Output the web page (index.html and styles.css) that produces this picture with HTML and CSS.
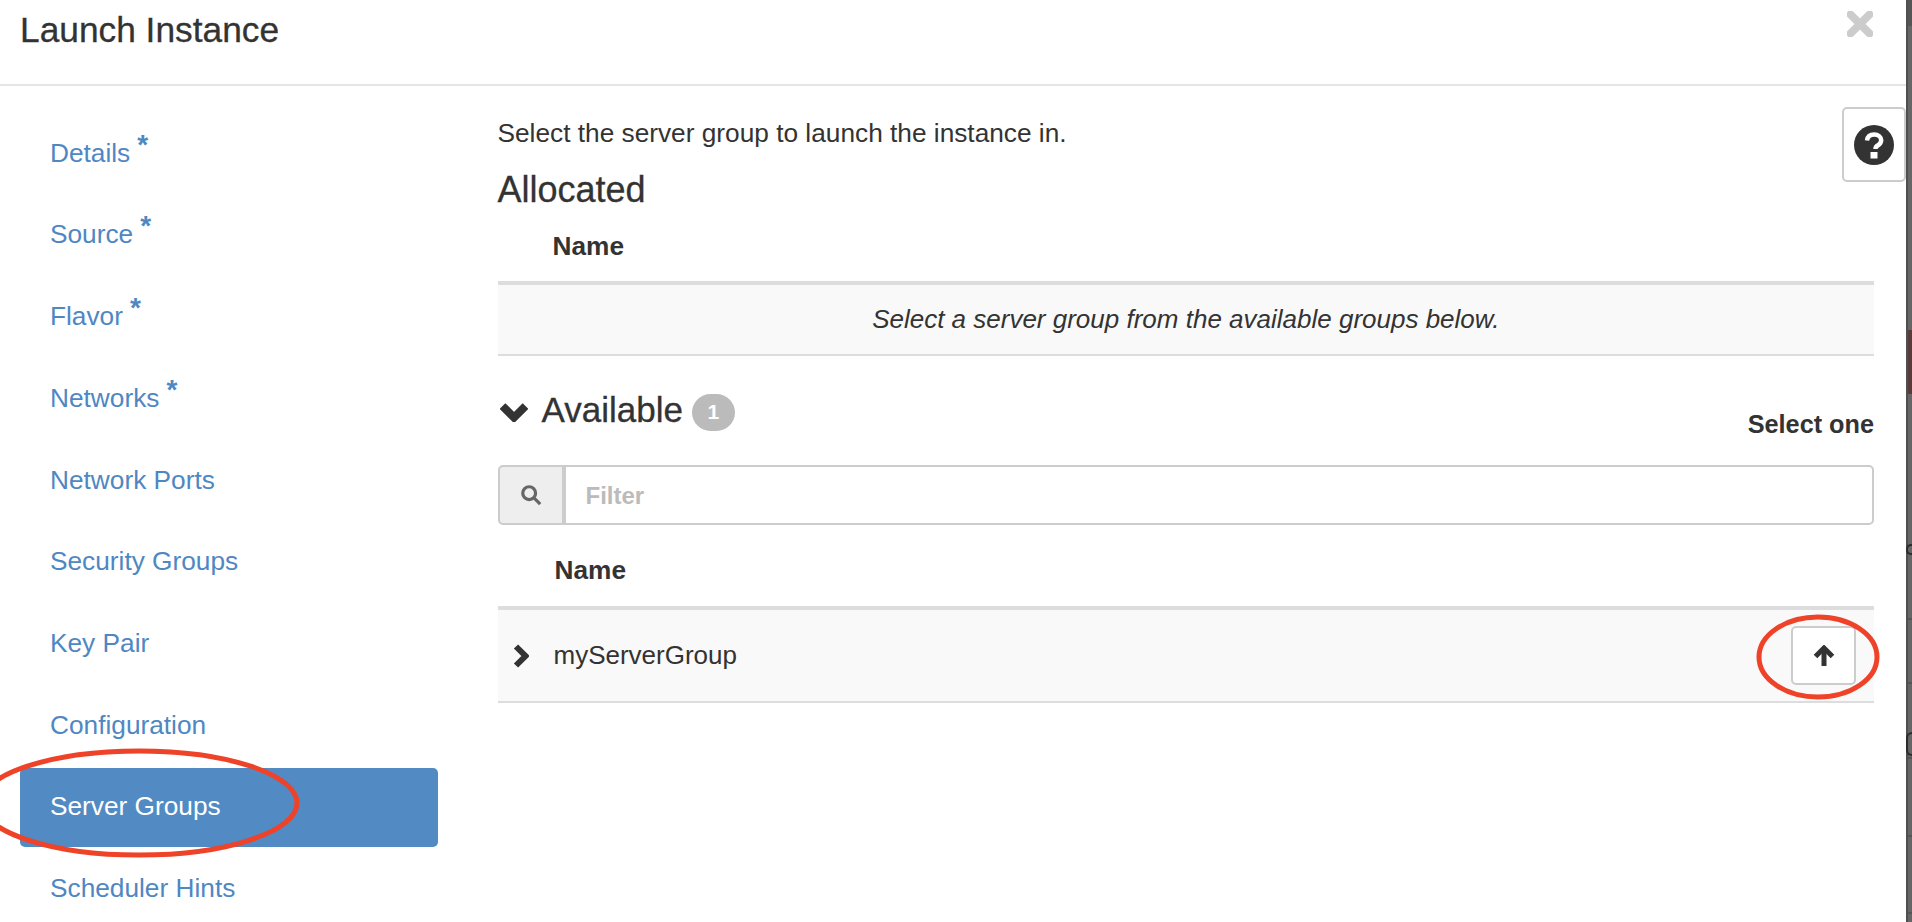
FILE: index.html
```html
<!DOCTYPE html>
<html lang="en">
<head>
<meta charset="utf-8">
<title>Launch Instance</title>
<link rel="stylesheet" href="styles.css">
</head>
<body>
<div class="page">
  <div class="modal">
    <header class="modal-header">
      <h1 class="modal-title">Launch Instance</h1>
      <svg class="close-icon" viewBox="0 0 26 26"><path d="M3.500 3.500 22.500 22.500M22.500 3.500 3.500 22.500" /></svg>
    </header>
    <div class="modal-body">
      <nav class="wizard-nav">
        <a class="nav-item">Details<span class="req">*</span></a>
        <a class="nav-item">Source<span class="req">*</span></a>
        <a class="nav-item">Flavor<span class="req">*</span></a>
        <a class="nav-item">Networks<span class="req">*</span></a>
        <a class="nav-item">Network Ports</a>
        <a class="nav-item">Security Groups</a>
        <a class="nav-item">Key Pair</a>
        <a class="nav-item">Configuration</a>
        <a class="nav-item active">Server Groups</a>
        <a class="nav-item">Scheduler Hints</a>
      </nav>
      <main class="content">
        <p class="intro">Select the server group to launch the instance in.</p>
        <h2 class="section-title allocated">Allocated</h2>
        <div class="col-head first">Name</div>
        <div class="row empty-row">Select a server group from the available groups below.</div>
        <div class="available-head">
          <h2 class="section-title available-title">
            <svg class="chevron-down" viewBox="0 0 28 20"><path d="M2.500 4 14 15.500 25.500 4"/></svg>
            Available
            <span class="badge">1</span>
          </h2>
          <span class="select-one">Select one</span>
        </div>
        <div class="filter">
          <span class="addon">
            <svg class="search-icon" viewBox="0 0 24 24"><circle cx="10" cy="10" r="7"/><path d="M15.500 15.500 22 22"/></svg>
          </span>
          <span class="filter-input">Filter</span>
        </div>
        <div class="col-head second">Name</div>
        <div class="row item-row">
          <svg class="chevron-right" viewBox="0 0 16 26"><path d="M3 3.500 12.500 13 3 22.500"/></svg>
          <span class="item-name">myServerGroup</span>
          <button class="up-btn" type="button">
            <svg class="arrow-up" viewBox="0 0 22 22"><path d="M11 21V4"/><path d="M2.500 11.500 11 3l8.500 8.500"/></svg>
          </button>
        </div>
      </main>
    </div>
    <button class="help-btn" type="button">
      <svg viewBox="0 0 40 40"><circle cx="20" cy="20" r="20" fill="#333"/><path d="M13 15.500c.5-4 3.500-6 7.200-6 4 0 7 2.400 7 5.800 0 2.600-1.500 4-3.500 5.200-1.500.9-2.200 1.600-2.200 3.500" fill="none" stroke="#fff" stroke-width="4.500"/><rect x="16.500" y="27" width="7" height="6.500" fill="#fff"/></svg>
    </button>
  </div>
  <div class="backdrop">
    <span class="frag frag-e"></span>
    <span class="frag frag-c"></span>
  </div>
  <svg class="mark mark-nav" viewBox="0 0 322 112"><ellipse cx="161" cy="55" rx="158" ry="52"/></svg>
  <svg class="mark mark-btn" viewBox="0 0 124 86"><ellipse cx="62" cy="43" rx="59" ry="40"/></svg>
</div>
</body>
</html>
```

FILE: styles.css
```css
* { box-sizing: border-box; }
html, body { margin: 0; height: 100%; overflow: hidden; }
body { font-family: "Liberation Sans", Arial, sans-serif; color: #333; background: #fff; }

.page { position: relative; display: flex; width: 1912px; height: 922px; overflow: hidden; }
.modal { position: relative; flex: 1; display: flex; flex-direction: column; background: #fff; min-width: 0; }

.backdrop {
  position: relative;
  width: 6px;
  overflow: hidden;
  background:
    linear-gradient(90deg, #4f4f4f 0, #4f4f4f 2px, transparent 2px),
    linear-gradient(180deg,
      #555 0, #555 26px, #666 26px, #666 330px,
      #5b3b3a 330px, #5b3b3a 394px, #666 394px, #666 618px,
      #555 618px, #555 620px, #666 620px, #666 682px,
      #555 682px, #555 684px, #666 684px, #666 757px,
      #555 757px, #555 759px, #666 759px, #666 835px,
      #555 835px, #555 837px, #666 837px, #666 912px,
      #555 912px, #555 914px, #666 914px);
}
.frag { position: absolute; display: block; border: 2px solid #2c2c2c; border-right: 0; }
.frag-e { left: 0; top: 544px; width: 6px; height: 11px; border-radius: 5px 0 0 5px; }
.frag-c { left: 0; top: 732px; width: 6px; height: 24px; border-radius: 6px 0 0 6px; }

.modal-header { display: flex; flex: none; justify-content: space-between; height: 86px; padding: 11px 33px 0 20px; border-bottom: 2px solid #e5e5e5; }
.modal-title { margin: 0; font-size: 35.300px; line-height: 38px; font-weight: 400; -webkit-text-stroke: .3px #333; }
.close-icon { width: 26px; height: 26px; fill: none; stroke: #ccc; stroke-width: 8; stroke-linecap: round; }

.modal-body { flex: 1; display: flex; min-height: 0; }
.wizard-nav { width: 418px; margin-left: 20px; padding-top: 25.500px; display: flex; flex-direction: column; flex-shrink: 0; }
.nav-item { display: block; flex: none; height: 81.750px; padding: 25px 30px 0; font-size: 26.250px; line-height: 32px; color: #4f87c3; }
.nav-item.active { height: 79px; margin: 2.500px 0 .25px; padding-top: 22px; background: #528ac3; color: #fff; border-radius: 5px; }
.req { position: relative; top: -8px; margin-left: 7px; font-size: 28px; line-height: 20px; font-weight: 700; }

.content { flex: 1; padding: 0 32px 0 59.500px; min-width: 0; }
.intro { margin: 0; padding-top: 30.500px; font-size: 26.250px; line-height: 32px; }
.section-title { margin: 0; font-size: 35px; font-weight: 400; line-height: 42px; -webkit-text-stroke: .3px #333; }
.allocated { margin-top: 20.500px; font-size: 36px; }
.col-head { font-size: 26.250px; font-weight: 700; line-height: 32px; border-bottom: 4px solid #ddd; }
.col-head.first { padding: 19px 0 19px 55px; }
.col-head.second { padding: 29px 0 20px 57px; }
.row { background: #f9f9f9; border-bottom: 2px solid #ddd; font-size: 26px; }
.empty-row { height: 71px; line-height: 68px; font-style: italic; text-align: center; }

.available-head { display: flex; justify-content: space-between; align-items: flex-end; margin-top: 21.500px; height: 62.500px; }
.available-title { display: flex; align-items: center; gap: 12px; align-self: flex-start; margin-top: 11px; }
.chevron-down { width: 28px; height: 20px; margin: 4px 2px 0; fill: none; stroke: #333; stroke-width: 8; }
.badge { display: inline-flex; align-items: center; justify-content: center; width: 43px; height: 37px; margin-left: -3px; margin-top: 5px; border-radius: 19px; background: #bbb; color: #fff; font-size: 21px; font-weight: 700; -webkit-text-stroke: 0; }
.select-one { font-size: 25.250px; font-weight: 700; line-height: 32px; }

.filter { display: flex; height: 60px; margin-top: 25px; }
.addon { display: flex; align-items: center; justify-content: center; width: 66px; background: #eee; border: 2px solid #ccc; border-radius: 5px 0 0 5px; }
.search-icon { width: 22px; height: 22px; fill: none; stroke: #666; stroke-width: 3.500; }
.filter-input { flex: 1; padding: 0 20px; font-size: 24px; font-weight: 700; line-height: 58px; color: #bbb; background: #fff; border: 2px solid #ccc; border-radius: 0 5px 5px 0; }

.item-row { display: flex; align-items: center; height: 93px; padding: 0 18px 0 15px; }
.chevron-right { width: 16px; height: 26px; fill: none; stroke: #333; stroke-width: 6; flex-shrink: 0; }
.item-name { flex: 1; margin-left: 25px; font-size: 26px; }
.up-btn { display: flex; align-items: center; justify-content: center; width: 65px; height: 59px; padding: 0; background: #fff; border: 2px solid #ccc; border-radius: 5px; }
.arrow-up { width: 22px; height: 22px; fill: none; stroke: #333; stroke-width: 5; }

.help-btn { position: absolute; left: 1842px; top: 107px; width: 64px; height: 75px; padding: 0; display: flex; align-items: center; justify-content: center; background: #fff; border: 2px solid #ccc; border-radius: 5px; }
.help-btn svg { width: 40px; height: 40px; }

.mark { position: absolute; fill: none; stroke: #ee4328; stroke-width: 5; }
.mark-nav { left: -22px; top: 748px; width: 322px; height: 112px; }
.mark-btn { left: 1756px; top: 614px; width: 124px; height: 86px; }
```
